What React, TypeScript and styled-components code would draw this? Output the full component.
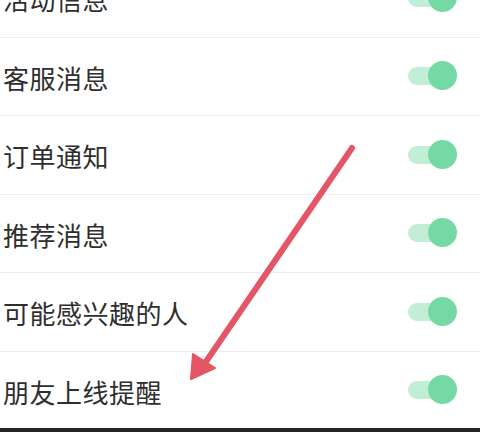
import styled, { createGlobalStyle } from 'styled-components';

const GlobalStyle = createGlobalStyle`
  html, body {
    margin: 0;
    padding: 0;
    background: #fff;
  }
  body {
    width: 480px;
    height: 432px;
    overflow: hidden;
    font-family: "Noto Sans CJK SC", "Noto Sans", sans-serif;
  }
`;

const Screen = styled.div`
  position: relative;
  width: 480px;
  height: 432px;
  overflow: hidden;
  background: #fff;
`;

const List = styled.div`
  display: flex;
  flex-direction: column;
  margin-top: -41px;
`;

const Row = styled.div`
  display: flex;
  align-items: center;
  justify-content: space-between;
  height: 77.5px;
  padding: 0 23px 0 3px;
  border-bottom: 1px solid #ececec;
`;

const Label = styled.span`
  font-size: 26px;
  color: #2e2e2e;
  letter-spacing: 0.5px;
  line-height: 1;
  margin-top: 3px;
`;

const Switch = styled.div`
  position: relative;
  width: 50px;
  height: 30px;
  display: flex;
  align-items: center;
`;

const Track = styled.div`
  width: 44px;
  height: 18px;
  border-radius: 9px;
  background: #c2eed8;
  margin-left: 1px;
`;

const Thumb = styled.div`
  position: absolute;
  right: 0;
  top: 0;
  width: 29px;
  height: 29px;
  border-radius: 50%;
  background: #74d9a4;
`;

const BottomBar = styled.div`
  position: absolute;
  left: 0;
  right: 0;
  bottom: 0;
  height: 4px;
  background: #262626;
`;

const Arrow = styled.svg`
  position: absolute;
  left: 0;
  top: 0;
  pointer-events: none;
`;

const items = ['活动信息', '客服消息', '订单通知', '推荐消息', '可能感兴趣的人', '朋友上线提醒'];

const Toggle = () => (
  <Switch>
    <Track />
    <Thumb />
  </Switch>
);

export default function App() {
  return (
    <Screen>
      <GlobalStyle />
      <List>
        {items.map((item) => (
          <Row key={item}>
            <Label>{item}</Label>
            <Toggle />
          </Row>
        ))}
      </List>
      <Arrow width="480" height="432" viewBox="0 0 480 432">
        <line x1="352" y1="148" x2="203" y2="366" stroke="#e45566" strokeWidth="6" strokeLinecap="round" />
        <polygon points="191,379 193,354 215,368" fill="#e45566" stroke="#e45566" strokeWidth="2" strokeLinejoin="round" />
      </Arrow>
      <BottomBar />
    </Screen>
  );
}
